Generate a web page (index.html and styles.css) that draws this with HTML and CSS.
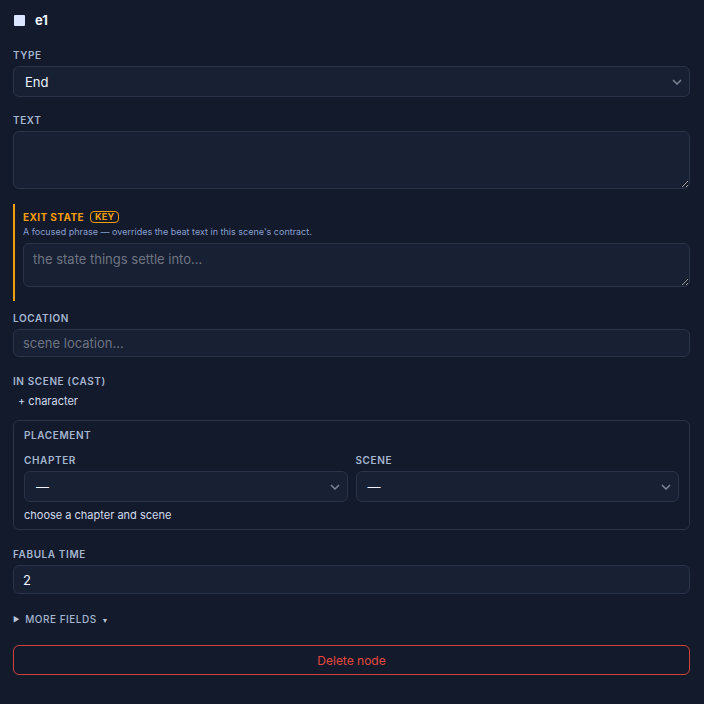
FILE: index.html
```html
<!DOCTYPE html>
<html>
<head>
<meta charset="utf-8">
<link rel="stylesheet" href="styles.css">
</head>
<body>
<div class="panel">
  <div class="header"><span class="swatch"></span><span class="node-id">e1</span></div>

  <div class="field f-type">
    <div class="label">Type</div>
    <div class="select tall"><span>End</span><svg class="chev" width="10" height="6" viewBox="0 0 10 6"><path d="M1 1l4 4 4-4" fill="none" stroke="#7d8595" stroke-width="1.5"/></svg></div>
  </div>

  <div class="field f-text">
    <div class="label">Text</div>
    <textarea class="area big"></textarea>
  </div>

  <div class="exit">
    <div class="exit-title">Exit state <span class="badge">KEY</span></div>
    <div class="exit-desc">A focused phrase — overrides the beat text in this scene's contract.</div>
    <textarea class="area mid" placeholder="the state things settle into..."></textarea>
  </div>

  <div class="field f-loc">
    <div class="label">Location</div>
    <input class="input" placeholder="scene location...">
  </div>

  <div class="field f-cast">
    <div class="label">In scene (cast)</div>
    <div class="add">+ character</div>
  </div>

  <div class="placement">
    <div class="label">Placement</div>
    <div class="cols">
      <div class="col">
        <div class="label">Chapter</div>
        <div class="select tall"><span>—</span><svg class="chev" width="10" height="6" viewBox="0 0 10 6"><path d="M1 1l4 4 4-4" fill="none" stroke="#7d8595" stroke-width="1.5"/></svg></div>
      </div>
      <div class="col">
        <div class="label">Scene</div>
        <div class="select tall"><span>—</span><svg class="chev" width="10" height="6" viewBox="0 0 10 6"><path d="M1 1l4 4 4-4" fill="none" stroke="#7d8595" stroke-width="1.5"/></svg></div>
      </div>
    </div>
    <div class="hint">choose a chapter and scene</div>
  </div>

  <div class="field f-fab">
    <div class="label">Fabula time</div>
    <input class="input num" value="2">
  </div>

  <div class="more"><span class="tri">▶</span> MORE FIELDS <span class="caret">▾</span></div>

  <button class="delete">Delete node</button>
</div>
</body>
</html>
```

FILE: styles.css
```css
html, body {
  margin: 0;
  padding: 0;
  background: #131a2c;
}
body {
  font-family: Inter, "Noto Sans", "Liberation Sans", sans-serif;
  color: #e6ecf7;
}
.panel {
  padding: 13px 14px 20px 13px;
  display: flex;
  flex-direction: column;
}
.header {
  display: flex;
  align-items: center;
  height: 14px;
  margin-bottom: 22px;
}
.swatch {
  width: 11px;
  height: 11px;
  background: #dce5ff;
  margin-left: 1px;
  margin-right: 10px;
  border-radius: 1px;
}
.node-id {
  font-size: 13px;
  font-weight: 700;
  color: #eef3ff;
}
.label {
  font-size: 10px;
  line-height: 12px;
  font-weight: 600;
  letter-spacing: 0.06em;
  text-transform: uppercase;
  color: #a5b6cf;
  margin-bottom: 5px;
}
.field { display: flex; flex-direction: column; }
.f-type { margin-bottom: 17px; }
.f-text { margin-bottom: 15px; }
.f-loc { margin-bottom: 18px; }
.f-cast { margin-bottom: 12px; }
.f-fab { margin-bottom: 20px; }

.select, .input, .area {
  box-sizing: border-box;
  background: #182033;
  border: 1px solid #2a3347;
  border-radius: 6px;
  color: #eef3ff;
  font-family: inherit;
  font-size: 13px;
}
.select {
  display: flex;
  align-items: center;
  justify-content: space-between;
  padding: 0 7px 0 11px;
}
.select.tall { height: 31px; }
.chev { flex: none; }
.area {
  display: block;
  width: 100%;
  resize: vertical;
  padding: 7px 9px;
  outline: none;
}
.area.big { height: 58px; }
.area.mid { height: 44px; }
.area::placeholder, .input::placeholder {
  color: #6e7482;
}
.input {
  width: 100%;
  height: 28px;
  padding: 0 9px;
  outline: none;
}
.input.num { height: 29px; }

.exit {
  border-left: 2px solid #f59e0b;
  padding: 6px 0 14px 8px;
  margin-bottom: 11px;
}
.exit-title {
  font-size: 10px;
  line-height: 14px;
  font-weight: 700;
  letter-spacing: 0.04em;
  text-transform: uppercase;
  color: #f59e0b;
  display: flex;
  align-items: center;
}
.badge {
  margin-left: 6px;
  font-size: 9px;
  line-height: 10px;
  padding: 0 4px;
  border: 1px solid #f59e0b;
  border-radius: 4px;
  color: #f59e0b;
  letter-spacing: 0.03em;
}
.exit-desc {
  font-size: 9px;
  line-height: 13px;
  color: #8a9fcc;
  margin-top: 1px;
  margin-bottom: 5px;
}
.add {
  font-size: 11px;
  line-height: 14px;
  color: #d2dcec;
  margin-left: 5px;
  margin-top: 2px;
}
.placement {
  border: 1px solid #2a3347;
  border-radius: 6px;
  padding: 8px 10px 7px 10px;
  margin-bottom: 18px;
}
.placement > .label { margin-bottom: 13px; }
.cols {
  display: grid;
  grid-template-columns: 1fr 1fr;
  gap: 8px;
}
.hint {
  font-size: 11px;
  line-height: 14px;
  color: #d2dcec;
  margin-top: 6px;
}
.more {
  font-size: 10px;
  line-height: 12px;
  font-weight: 500;
  letter-spacing: 0.05em;
  color: #a5b6cf;
  margin-top: -1px;
  margin-bottom: 19px;
}
.tri { font-size: 7px; vertical-align: 1px; color: #b8c4d8; margin-right: 2px; }
.caret { font-size: 8px; color: #b8c4d8; margin-left: 3px; }
.delete {
  height: 30px;
  width: 100%;
  background: transparent;
  border: 1px solid #d0433a;
  border-radius: 6px;
  color: #e5483d;
  font-family: inherit;
  font-size: 12px;
}
```
